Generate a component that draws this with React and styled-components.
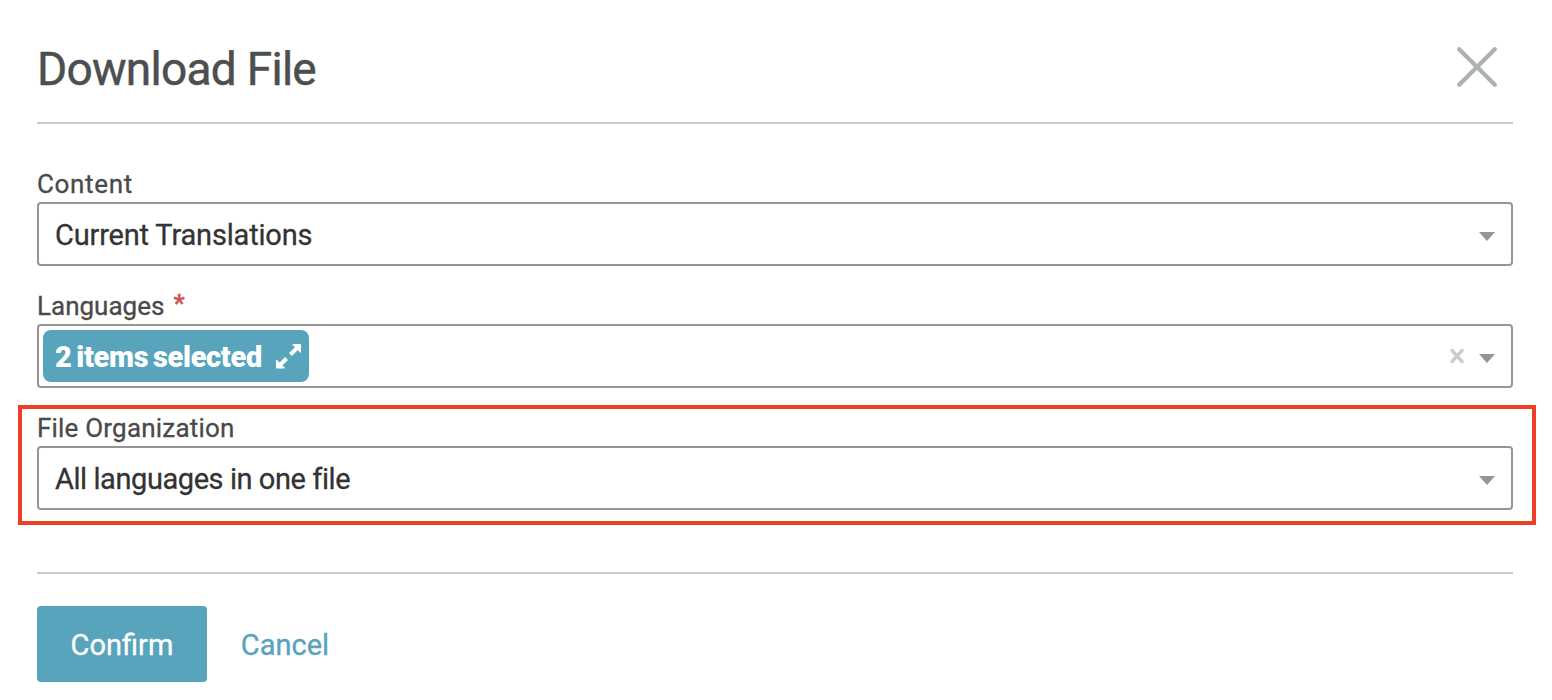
import React from "react";
import styled, { createGlobalStyle } from "styled-components";

const GlobalStyle = createGlobalStyle`
  * {
    box-sizing: border-box;
  }
  body {
    margin: 0;
    background: #ffffff;
    font-family: Roboto, "Liberation Sans", sans-serif;
  }
`;

const Modal = styled.div`
  height: 700px;
  padding: 0 39px 0 37px;
  overflow: hidden;
`;

const Header = styled.header`
  display: flex;
  align-items: center;
  justify-content: space-between;
  height: 124px;
  padding: 12px 15px 0 0;
  border-bottom: 2px solid #cccccc;
`;

const Title = styled.h1`
  margin: 0;
  padding-top: 3px;
  font-size: 46px;
  font-weight: 400;
  line-height: 60px;
  letter-spacing: -0.72px;
  -webkit-text-stroke: 0.5px;
  color: #4c4f4f;
  white-space: nowrap;
`;

const IconButton = styled.button`
  display: flex;
  padding: 0;
  border: 0;
  background: none;
  cursor: pointer;
`;

const Form = styled.div`
  display: flex;
  flex-direction: column;
  gap: 18px;
  height: 450px;
  padding-top: 38px;
  border-bottom: 2px solid #cccccc;
`;

const Field = styled.div`
  position: relative;
`;

/* red frame drawn over the field and its surroundings */
const Highlight = styled.div`
  position: absolute;
  inset: -1px -23px -15px -19px;
  border: 4px solid #ec4026;
  pointer-events: none;
`;

const Label = styled.label`
  display: flex;
  height: 40px;
  font-size: 26px;
  line-height: 44px;
  letter-spacing: ${(props) => props.$spacing || "0"};
  -webkit-text-stroke: 0.3px;
  color: #4a4a4a;
`;

const Required = styled.span`
  margin-left: 9px;
  font-size: 24px;
  font-weight: 900;
  line-height: 39px;
  color: #cd574c;
`;

const Select = styled.div`
  display: flex;
  align-items: center;
  height: 64px;
  padding: 0 16px 0 ${(props) => (props.$multi ? "4px" : "16px")};
  border: 2px solid #959595;
  border-radius: 4px;
  background: #ffffff;
`;

const Value = styled.span`
  flex: 1;
  padding-top: 3px;
  font-size: 29px;
  line-height: 57px;
  letter-spacing: ${(props) => props.$spacing || "0"};
  -webkit-text-stroke: 0.3px;
  color: #333333;
`;

const Chip = styled.span`
  display: flex;
  align-items: center;
  justify-content: space-between;
  width: 266px;
  height: 52px;
  margin-right: auto;
  padding: 2px 7px 0 12px;
  border-radius: 8px;
  background: #58a4bc;
  color: #ffffff;
  font-size: 29px;
  font-weight: 900;
  letter-spacing: -0.35px;
  word-spacing: -2px;
  white-space: nowrap;
`;

const Arrow = styled.span`
  width: 0;
  height: 0;
  margin-top: 4px;
  border: 8px solid transparent;
  border-top: 9px solid #959595;
  border-bottom: 0;
`;

const Footer = styled.footer`
  display: flex;
  padding-top: 32px;
`;

const Button = styled.button`
  height: 76px;
  padding: 2px 0 0;
  width: ${(props) => (props.$primary ? "170px" : "156px")};
  border: 0;
  border-radius: 4px;
  background: ${(props) => (props.$primary ? "#58a4bc" : "transparent")};
  color: ${(props) => (props.$primary ? "#ffffff" : "#58a4bc")};
  font-family: inherit;
  font-size: 29px;
  line-height: 74px;
  -webkit-text-stroke: 0.3px;
  cursor: pointer;
`;

const CloseIcon = () => (
  <svg width="42" height="42" viewBox="0 0 42 42" fill="none">
    <path
      d="M3.2 3.2 38.8 38.8 M38.8 3.2 3.2 38.8"
      stroke="#abb2b1"
      strokeWidth="4.3"
      strokeLinecap="round"
    />
  </svg>
);

const ClearIcon = () => (
  <svg width="14" height="16" viewBox="0 0 14 16" fill="none">
    <path
      d="M2 2.5 12 13.5 M12 2.5 2 13.5"
      stroke="#cccccc"
      strokeWidth="3.4"
      strokeLinecap="round"
    />
  </svg>
);

const ExpandIcon = () => (
  <svg width="26" height="26" viewBox="0 1 26 26" fill="none">
    <path d="M14.5 11.5 21 5 M10.5 15.5 4 22" stroke="#ffffff" strokeWidth="4" />
    <path
      d="M16.8 1.5H24.5V9.5z M.5 17v8H8.5z"
      fill="#ffffff"
      stroke="#ffffff"
      strokeLinejoin="round"
    />
  </svg>
);

const ClearButton = styled(IconButton)`
  margin-right: 15px;
`;

const App = () => {
  return (
    <>
      <GlobalStyle />
      <Modal>
        <Header>
          <Title>Download File</Title>
          <IconButton aria-label="Close">
            <CloseIcon />
          </IconButton>
        </Header>
        <Form>
          <Field>
            <Label $spacing="0.65px">Content</Label>
            <Select>
              <Value $spacing="-0.18px">Current Translations</Value>
              <Arrow />
            </Select>
          </Field>
          <Field>
            <Label>
              Languages<Required>*</Required>
            </Label>
            <Select $multi>
              <Chip>
                2 items selected
                <ExpandIcon />
              </Chip>
              <ClearButton aria-label="Clear">
                <ClearIcon />
              </ClearButton>
              <Arrow />
            </Select>
          </Field>
          <Field>
            <Label $spacing="0.2px">File Organization</Label>
            <Select>
              <Value $spacing="-0.43px">All languages in one file</Value>
              <Arrow />
            </Select>
            <Highlight />
          </Field>
        </Form>
        <Footer>
          <Button $primary>Confirm</Button>
          <Button>Cancel</Button>
        </Footer>
      </Modal>
    </>
  );
};

export default App;
